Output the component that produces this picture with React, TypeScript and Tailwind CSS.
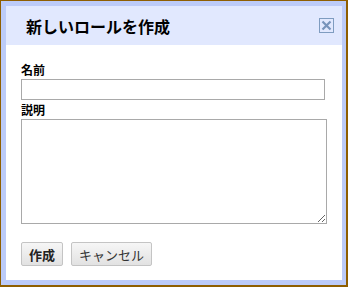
import React from "react";

const font = { fontFamily: '"Noto Sans CJK JP", "Noto Sans", sans-serif' };

const CloseIcon = () => (
  <svg width="15" height="15" viewBox="0 0 15 15">
    <rect x="0.5" y="0.5" width="14" height="14" fill="none" stroke="#7f9cc0" />
    <path d="M3.5 3.5 L11.5 11.5 M11.5 3.5 L3.5 11.5" stroke="#7793bb" strokeWidth="2.2" />
  </svg>
);

export default function App() {
  return (
    <div
      className="w-[348px] h-[287px] bg-[#bccbf8] border-t border-l border-r-2 border-b-2 border-[#8f5e00] pt-[5px] pl-[5px] pr-[4px] pb-[5px]"
      style={font}
    >
      <div className="w-[336px] h-[274px] bg-white flex flex-col">
        <div className="h-[39px] bg-[#e1e8fe] flex items-center justify-between pl-[20px] pr-[8px]">
          <h1 className="text-[16px] font-bold text-black leading-none">新しいロールを作成</h1>
          <button className="mb-[1px]">
            <CloseIcon />
          </button>
        </div>
        <div className="flex flex-col items-start px-[15px] pt-[17px]">
          <label className="text-[12px] font-bold leading-[15px] h-[15px] text-black">名前</label>
          <input className="mt-[2px] w-[304px] h-[21px] border border-[#a9a9a9] outline-none" />
          <label className="mt-[2px] text-[12px] font-bold leading-[15px] h-[15px] text-black">説明</label>
          <textarea className="mt-[2px] w-[306px] h-[105px] border border-[#a9a9a9] outline-none block" />
          <div className="flex gap-[8px] mt-[18px]">
            <button className="w-[42px] h-[24px] rounded-[2px] border border-[#c4c4c4] bg-gradient-to-b from-[#f6f6f6] to-[#e2e2e2] text-[13px] font-bold text-[#222] leading-none">
              作成
            </button>
            <button className="w-[81px] h-[24px] rounded-[2px] border border-[#c4c4c4] bg-gradient-to-b from-[#f6f6f6] to-[#e2e2e2] text-[13px] text-[#333] leading-none">
              キャンセル
            </button>
          </div>
        </div>
      </div>
    </div>
  );
}
